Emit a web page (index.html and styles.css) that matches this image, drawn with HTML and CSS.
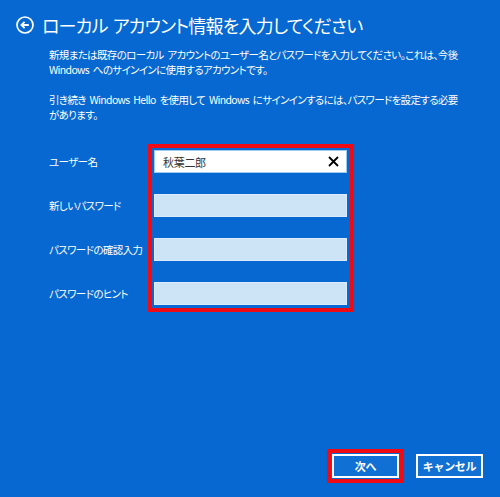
FILE: index.html
```html
<!DOCTYPE html>
<html lang="ja">
<head>
    <meta charset="UTF-8">
    <meta name="viewport" content="width=device-width, initial-scale=1.0">
    <title>ローカル アカウント情報を入力してください</title>
    <link rel="stylesheet" href="styles.css">
</head>
<body>
    <div class="page">
        <div class="header">
            <span class="back-icon">
                <svg width="18" height="18" viewBox="0 0 18 18">
                    <circle cx="9" cy="9" r="8" fill="none" stroke="#fff" stroke-width="1.7"/>
                    <path d="M12.8 9H5.6 M8.6 5.8 L5.4 9 L8.6 12.2" fill="none" stroke="#fff" stroke-width="1.8"/>
                </svg>
            </span>
            <h1>ローカル アカウント情報を入力してください</h1>
        </div>

        <div class="content">
            <p>新規または既存のローカル アカウントのユーザー名とパスワードを入力してください。これは、今後<br>Windows へのサインインに使用するアカウントです。</p>
            <p>引き続き Windows Hello を使用して Windows にサインインするには、パスワードを設定する必要<br>があります。</p>

            <div class="form">
                <div class="labels">
                    <label>ユーザー名</label>
                    <label>新しいパスワード</label>
                    <label>パスワードの確認入力</label>
                    <label>パスワードのヒント</label>
                </div>
                <div class="fields highlight">
                    <div class="field active">
                        <span class="field-text">秋葉二郎</span>
                        <svg class="clear" width="11" height="11" viewBox="0 0 11 11">
                            <path d="M1 1 L10 10 M10 1 L1 10" stroke="#000" stroke-width="1.8"/>
                        </svg>
                    </div>
                    <div class="field"></div>
                    <div class="field"></div>
                    <div class="field"></div>
                </div>
            </div>
        </div>

        <div class="footer">
            <div class="highlight button-frame">
                <button class="btn">次へ</button>
            </div>
            <button class="btn">キャンセル</button>
        </div>
    </div>
</body>
</html>
```

FILE: styles.css
```css
:root {
    --bg-color: #0668d0;
    --field-color: #cde3f6;
    --mark-color: #f00a14;
}

body {
    margin: 0;
    padding: 0;
    background: var(--bg-color);
    color: #fff;
    font-family: "Noto Sans CJK JP", "Noto Sans", sans-serif;
    font-feature-settings: "palt";
}

.page {
    display: flex;
    flex-direction: column;
    height: 497px;
}

.header {
    display: flex;
    align-items: center;
    padding: 12px 0 0 16px;
    height: 26px;
}

.back-icon {
    display: flex;
    width: 18px;
    height: 18px;
    margin-right: 8px;
}

.header h1 {
    margin: 0;
    font-size: 18px;
    font-weight: normal;
    line-height: 26px;
    letter-spacing: -0.8px;
    word-spacing: 2px;
}

.content {
    padding: 9px 0 0 49px;
}

.content p {
    margin: 0 0 15px 0;
    font-size: 10.5px;
    line-height: 15px;
    letter-spacing: -0.65px;
    word-spacing: 2px;
    white-space: nowrap;
}

.form {
    display: flex;
    margin-top: 22px;
}

.labels {
    display: flex;
    flex-direction: column;
    gap: 21px;
    width: 99px;
    padding-top: 6px;
}

.labels label {
    height: 23px;
    line-height: 23px;
    font-size: 10.5px;
    letter-spacing: -0.6px;
    white-space: nowrap;
}

.highlight {
    border: 4px solid var(--mark-color);
}

.fields {
    display: flex;
    flex-direction: column;
    gap: 21px;
    width: 193px;
    padding: 2px 3px 3px 2px;
}

.field {
    height: 21px;
    background: var(--field-color);
    border: 1px solid #dcebf9;
}

.field.active {
    display: flex;
    align-items: center;
    justify-content: space-between;
    background: #fff;
    border-color: #9fcaf0;
    padding: 0 7px 0 8px;
}

.field-text {
    font-size: 11px;
    letter-spacing: -0.3px;
    color: #333;
}

.footer {
    display: flex;
    align-items: center;
    justify-content: flex-end;
    gap: 12px;
    margin-top: auto;
    padding: 0 17px 14px 0;
}

.button-frame {
    display: flex;
    padding: 1px;
}

.btn {
    width: 67px;
    height: 24px;
    padding: 0;
    border: 2px solid #fff;
    background: #1170d3;
    color: #fff;
    font-family: inherit;
    font-size: 11px;
    font-weight: bold;
    letter-spacing: -0.3px;
    cursor: pointer;
}
```
